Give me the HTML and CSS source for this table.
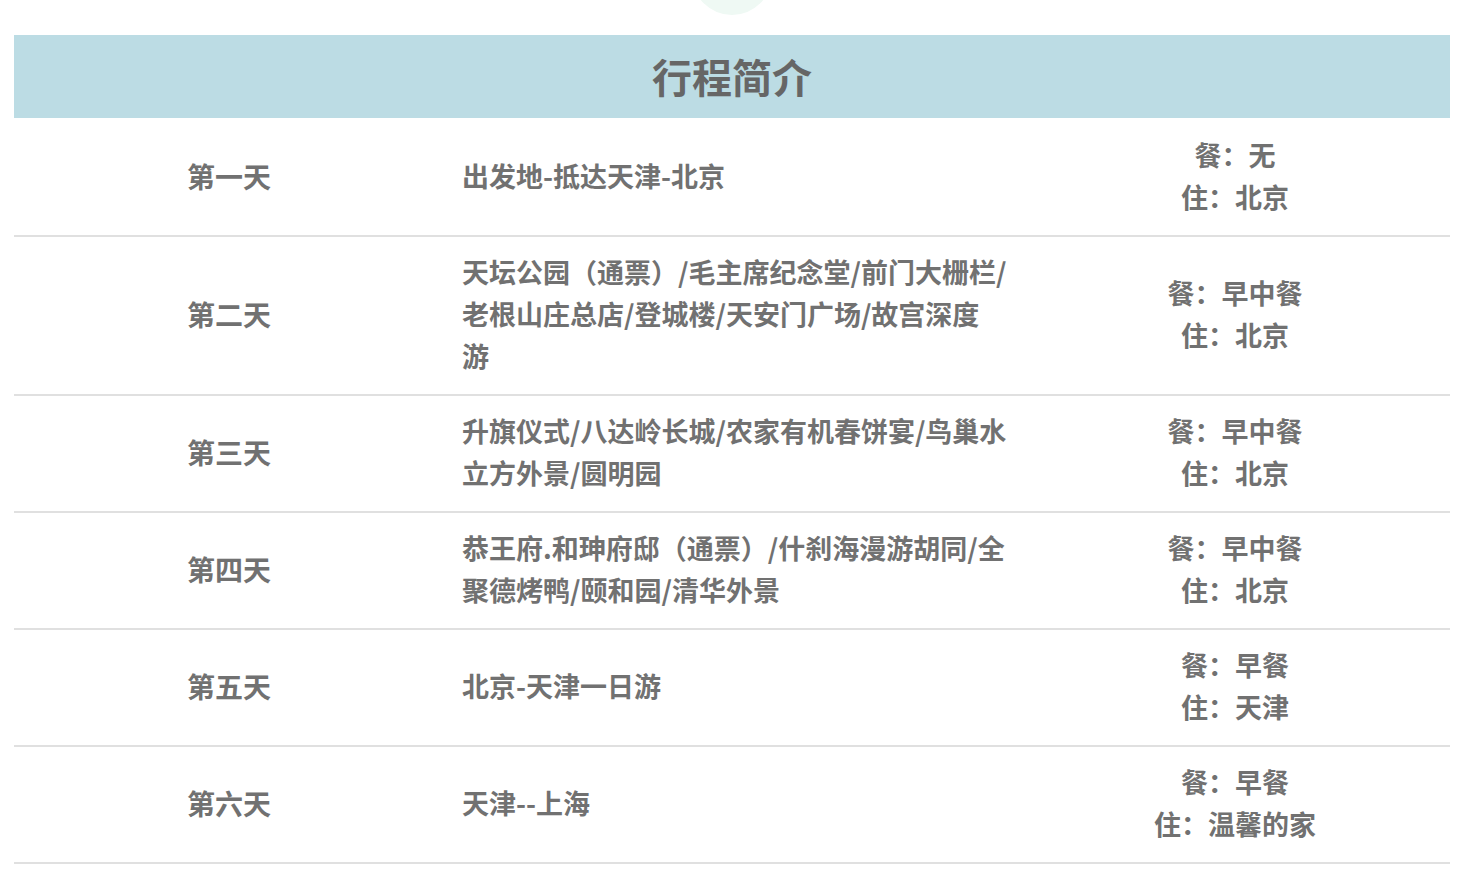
FILE: index.html
```html
<!DOCTYPE html>
<html lang="zh-CN">
<head>
<meta charset="utf-8">
<title>行程简介</title>
<link rel="stylesheet" href="styles.css">
</head>
<body>
<div class="page">
  <div class="deco-circle"></div>
  <div class="title-bar">行程简介</div>
  <div class="schedule">
    <div class="row">
      <div class="day">第一天</div>
      <div class="route">出发地-抵达天津-北京</div>
      <div class="info"><div>餐：无</div><div>住：北京</div></div>
    </div>
    <div class="row">
      <div class="day">第二天</div>
      <div class="route">天坛公园（通票）/毛主席纪念堂/前门大栅栏/老根山庄总店/登城楼/天安门广场/故宫深度<br>游</div>
      <div class="info"><div>餐：早中餐</div><div>住：北京</div></div>
    </div>
    <div class="row">
      <div class="day">第三天</div>
      <div class="route">升旗仪式/八达岭长城/农家有机春饼宴/鸟巢水立方外景/圆明园</div>
      <div class="info"><div>餐：早中餐</div><div>住：北京</div></div>
    </div>
    <div class="row">
      <div class="day">第四天</div>
      <div class="route">恭王府.和珅府邸（通票）/什刹海漫游胡同/全聚德烤鸭/颐和园/清华外景</div>
      <div class="info"><div>餐：早中餐</div><div>住：北京</div></div>
    </div>
    <div class="row">
      <div class="day">第五天</div>
      <div class="route">北京-天津一日游</div>
      <div class="info"><div>餐：早餐</div><div>住：天津</div></div>
    </div>
    <div class="row">
      <div class="day">第六天</div>
      <div class="route">天津--上海</div>
      <div class="info"><div>餐：早餐</div><div>住：温馨的家</div></div>
    </div>
  </div>
</div>
</body>
</html>
```

FILE: styles.css
```css
* { box-sizing: border-box; }
html, body { margin: 0; padding: 0; background: #ffffff; }
body {
  font-family: "Noto Sans CJK SC", "Noto Sans", sans-serif;
  font-weight: 700;
  color: #717171;
}
.page {
  position: relative;
  padding: 35px 14px 0;
  overflow: hidden;
  min-height: 878px;
}
.deco-circle {
  position: absolute;
  left: 692px;
  top: -65px;
  width: 80px;
  height: 80px;
  border-radius: 50%;
  background: #eff9f4;
}
.title-bar {
  position: relative;
  height: 83px;
  line-height: 83px;
  background: #bcdce4;
  text-align: center;
  font-size: 40px;
  color: #666666;
}
.schedule {
  display: flex;
  flex-direction: column;
  padding-top: 2px;
}
.row {
  display: grid;
  grid-template-columns: 430px 576px 1fr;
  align-items: center;
  padding: 14px 0 17px;
  border-bottom: 2px solid #e0e0e0;
  font-size: 27px;
  line-height: 42px;
}
.day { text-align: center; font-size: 28px; }
.route { padding: 0 3px 0 18px; text-align: left; }
.info { text-align: center; }
```
